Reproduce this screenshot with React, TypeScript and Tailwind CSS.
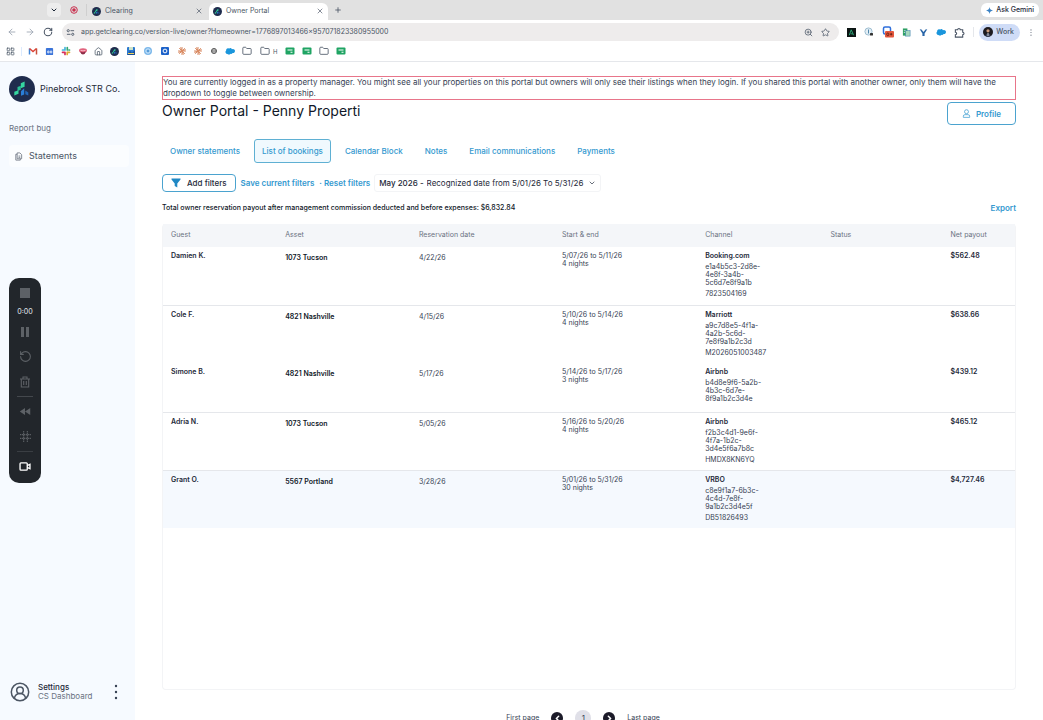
import type { ReactNode } from 'react';
import {
    ArrowLeft,
    ArrowRight,
    ChevronDown,
    ChevronLeft,
    ChevronRight,
    Folder,
    House,
    LayoutGrid,
    Plus,
    RotateCcw,
    RotateCw,
    Star,
    X,
    ZoomIn,
} from 'lucide-react';

interface Booking {
    guest: string;
    asset: string;
    reserved: string;
    dates: string;
    nights: string;
    channel: string;
    id: string;
    code?: string;
    payout: string;
    rowClass: string;
}

const bookings: Booking[] = [
    {
        guest: 'Damien K.',
        asset: '1073 Tucson',
        reserved: '4/22/26',
        dates: '5/07/26 to 5/11/26',
        nights: '4 nights',
        channel: 'Booking.com',
        id: 'e1a4b5c3-2d8e-4e8f-3a4b-5c6d7e8f9a1b',
        code: '7823504169',
        payout: '$562.48',
        rowClass: 'h-[58px] border-b border-gray-200',
    },
    {
        guest: 'Cole F.',
        asset: '4821 Nashville',
        reserved: '4/15/26',
        dates: '5/10/26 to 5/14/26',
        nights: '4 nights',
        channel: 'Marriott',
        id: 'a9c7d8e5-4f1a-4a2b-5c6d-7e8f9a1b2c3d',
        code: 'M2026051003487',
        payout: '$638.66',
        rowClass: 'h-[58px]',
    },
    {
        guest: 'Simone B.',
        asset: '4821 Nashville',
        reserved: '5/17/26',
        dates: '5/14/26 to 5/17/26',
        nights: '3 nights',
        channel: 'Airbnb',
        id: 'b4d8e9f6-5a2b-4b3c-6d7e-8f9a1b2c3d4e',
        payout: '$439.12',
        rowClass: 'h-[49px] border-b border-gray-200',
    },
    {
        guest: 'Adria N.',
        asset: '1073 Tucson',
        reserved: '5/05/26',
        dates: '5/16/26 to 5/20/26',
        nights: '4 nights',
        channel: 'Airbnb',
        id: 'f2b3c4d1-9e6f-4f7a-1b2c-3d4e5f6a7b8c',
        code: 'HMDX8KN6YQ',
        payout: '$465.12',
        rowClass: 'h-[58px] border-b border-gray-200',
    },
    {
        guest: 'Grant O.',
        asset: '5567 Portland',
        reserved: '3/28/26',
        dates: '5/01/26 to 5/31/26',
        nights: '30 nights',
        channel: 'VRBO',
        id: 'c8e9f1a7-6b3c-4c4d-7e8f-9a1b2c3d4e5f',
        code: 'DB51826493',
        payout: '$4,727.46',
        rowClass: 'h-[58px] bg-[#f5f9fe]',
    },
];

const columns = [
    { label: 'Guest', width: 'w-[13.4%]' },
    { label: 'Asset', width: 'w-[15.7%]' },
    { label: 'Reservation date', width: 'w-[16.8%]' },
    { label: 'Start & end', width: 'w-[16.8%]' },
    { label: 'Channel', width: 'w-[14.7%]' },
    { label: 'Status', width: 'w-[14.1%]' },
    { label: 'Net payout', width: 'w-[8.5%]' },
];

const tabs = [
    'Owner statements',
    'List of bookings',
    'Calendar Block',
    'Notes',
    'Email communications',
    'Payments',
];

const Logo = ({ className }: { className: string }) => (
    <svg viewBox="0 0 26 26" className={className} aria-hidden="true">
        <circle cx="13" cy="13" r="13" fill="#1f2c4d" />
        <path d="M11.800 7.200l3.800-1.700v5.300l-3.800 1.400z" fill="#35d6a0" />
        <path d="M8.500 11l3.300-1.300v4L8.500 15z" fill="#27bd93" />
        <path d="M5.300 15.800l4.200-1.600v3.600l-4.200 1.800z" fill="#35d6a0" />
        <path d="M12 15.200l3.200-3v6.200L12 19.800z" fill="#2a7fd8" />
        <path d="M16.300 14.500l3 2v3l-3-1.200z" fill="#2367b8" />
    </svg>
);

const Burst = () => (
    <svg viewBox="0 0 10 10" className="size-[10px]" stroke="#d98a62" strokeWidth="1" aria-hidden="true">
        <path d="M5 1v8M1 5h8M2.200 2.200l5.600 5.600M7.800 2.200L2.200 7.800M3.500 1.400l3 7.200M8.600 3.500l-7.200 3" />
    </svg>
);

const Cloud = ({ className }: { className: string }) => (
    <svg viewBox="0 0 12 9" className={className} fill="#1a96dc" aria-hidden="true">
        <path d="M3 8a2.400 2.400 0 01-1.600-4.200A2.300 2.300 0 015 1.600a2.200 2.200 0 013.300.7A2.500 2.500 0 119.200 7a2 2 0 01-2.600.7A2.200 2.200 0 013 8z" />
    </svg>
);

const Sheet = () => (
    <svg viewBox="0 0 10 10" className="size-[10px]" aria-hidden="true">
        <rect x=".5" y="1.500" width="9" height="7" rx="1" fill="#1fa463" />
        <path d="M2.500 4h5M5.500 6.200h2" stroke="#fff" strokeWidth="1.100" />
    </svg>
);

const Kebab = ({ className }: { className: string }) => (
    <svg viewBox="0 0 4 16" className={className} fill="currentColor" aria-hidden="true">
        <circle cx="2" cy="2" r="1.200" />
        <circle cx="2" cy="8" r="1.200" />
        <circle cx="2" cy="14" r="1.200" />
    </svg>
);

const BrowserTab = ({ title, active }: { title: string; active?: boolean }) => (
    <div
        className={`flex h-[17px] w-[119px] items-center gap-1 self-end px-1 pb-px ${
            active ? 'rounded-t-md bg-white' : ''
        }`}
    >
        <Logo className="size-[9px] shrink-0" />
        <span className="flex-1 text-[7px] text-gray-600">{title}</span>
        <button type="button" aria-label={`Close ${title}`}>
            <X className="size-[8px]" />
        </button>
    </div>
);

const Chrome = () => (
    <header className="shrink-0 border-b border-gray-200 bg-white text-gray-600">
        <div className="flex h-5 items-center bg-[#e1e1e1]">
            <button
                type="button"
                aria-label="Search tabs"
                className="ml-[47px] flex size-[14px] items-center justify-center rounded bg-[#ededed] text-gray-800"
            >
                <ChevronDown className="size-[8px]" strokeWidth={3} />
            </button>
            <svg viewBox="0 0 10 10" className="ml-2 size-[10px]" aria-hidden="true">
                <circle cx="5" cy="5" r="3.300" fill="none" stroke="#c9304f" />
                <circle cx="5" cy="5" r="1.800" fill="#c9304f" />
            </svg>
            <div className="ml-[7px] h-3 w-px bg-[#cfcfcf]" />
            <div className="ml-px flex h-full gap-[2px]">
                <BrowserTab title="Clearing" />
                <BrowserTab title="Owner Portal" active />
            </div>
            <button type="button" aria-label="New tab" className="ml-[6px]">
                <Plus className="size-[8px]" strokeWidth={2.5} />
            </button>
            <button
                type="button"
                className="mr-1 ml-auto flex h-[14px] items-center gap-[3px] rounded-md bg-white px-[5px] text-[7px] font-medium text-gray-800"
            >
                <svg viewBox="0 0 8 8" className="size-[7px]" fill="#3b82c4" aria-hidden="true">
                    <path d="M4 0c.4 2.400 1.600 3.600 4 4-2.400.4-3.600 1.600-4 4-.4-2.400-1.600-3.600-4-4 2.400-.4 3.600-1.600 4-4z" />
                </svg>
                Ask Gemini
            </button>
        </div>
        <div className="flex h-6 items-center">
            <div className="flex items-center gap-2 pl-[7px]">
                <ArrowLeft className="size-[10px] text-gray-400" />
                <ArrowRight className="size-[10px] text-gray-400" />
                <RotateCw className="size-[10px]" strokeWidth={2.5} />
            </div>
            <div className="ml-[9px] flex h-[18px] flex-1 items-center rounded-full bg-[#eeecec] px-1">
                <svg viewBox="0 0 10 10" className="size-[9px]" fill="none" stroke="currentColor" aria-hidden="true">
                    <circle cx="2.500" cy="3" r="1.200" />
                    <path d="M5 3h4M1 7h4" />
                    <circle cx="7.500" cy="7" r="1.200" />
                </svg>
                <input
                    aria-label="Address"
                    className="ml-[6px] flex-1 bg-transparent text-[7px] text-gray-600 outline-none"
                    defaultValue="app.getclearing.co/version-live/owner?Homeowner=1776897013466x957071823380955000"
                />
                <ZoomIn className="size-[9px]" />
                <Star className="mr-[5px] ml-2 size-[9px]" />
            </div>
            <div className="ml-[8px] flex items-center gap-2">
                <svg viewBox="0 0 10 10" className="size-[9px]" aria-hidden="true">
                    <rect width="10" height="10" fill="#0c1413" />
                    <path d="M2.500 8l2.200-6 2.600 6M4 6.500h2.500" fill="none" stroke="#2cae7c" />
                </svg>
                <svg viewBox="0 0 10 10" className="size-[10px]" aria-hidden="true">
                    <circle cx="4.500" cy="4.500" r="3.600" fill="#e3eef5" stroke="#9dbdd1" />
                    <path d="M4.500 2.500v4" stroke="#4f87ab" />
                    <rect x="6" y="6" width="3" height="2.600" rx=".5" fill="#333" />
                </svg>
                <svg viewBox="0 0 12 12" className="size-[12px]" aria-hidden="true">
                    <rect x="1.500" y="1" width="7" height="7" rx="1.500" fill="#fff" stroke="#2f6fdb" strokeWidth="1.500" />
                    <rect x="3" y="5" width="9" height="6.500" rx="1" fill="#e4573d" />
                    <rect x="4.800" y="7" width="2" height="2.600" rx=".8" fill="none" stroke="#5b1c12" strokeWidth=".8" />
                    <path d="M9.200 7v2.400M8 8.200h2.400" stroke="#5b1c12" strokeWidth=".8" />
                </svg>
                <svg viewBox="0 0 10 10" className="size-[9px]" aria-hidden="true">
                    <path d="M1 .5h5v8H1z" fill="#2d9f63" />
                    <rect x="4" y="3" width="5" height="6" fill="#a5d8bd" stroke="#3d7fae" strokeWidth=".6" />
                    <path d="M2 3h2M2 5h1.500" stroke="#fff" strokeWidth=".7" />
                </svg>
                <svg viewBox="0 0 10 10" className="size-[9px]" fill="#2a66a8" aria-hidden="true">
                    <path d="M.8 1.500l2 .3L5 4.500l2.200-2.700 2-.3L6.200 6v3H3.800V6z" />
                </svg>
                <Cloud className="h-[8px] w-[10px]" />
                <svg viewBox="0 0 12 12" className="size-[11px]" fill="none" stroke="currentColor" strokeWidth="1.200" aria-hidden="true">
                    <path d="M1.500 3H4a1.400 1.400 0 012.800 0h2.700v2.700a1.400 1.400 0 010 2.800V11h-8V8.500a1.400 1.400 0 000-2.800z" />
                </svg>
                <div className="h-[10px] w-px bg-gray-200" />
            </div>
            <button
                type="button"
                className="ml-[5px] flex h-[17px] items-center gap-[3px] rounded-full bg-[#cfdcf7] pr-[6px] pl-1 text-[7px] font-medium"
            >
                <svg viewBox="0 0 10 10" className="size-[10px]" aria-hidden="true">
                    <circle cx="5" cy="5" r="5" fill="#1c1b20" />
                    <circle cx="5" cy="3.800" r="1.600" fill="#c99a7c" />
                    <path d="M2.500 9a2.500 2.500 0 015 0L5 10z" fill="#39445e" />
                    <path d="M5 6v3" stroke="#eee" strokeWidth=".8" />
                </svg>
                Work
            </button>
            <Kebab className="mr-[11px] ml-[10px] h-[7px] w-[2px]" />
        </div>
        <nav aria-label="Bookmarks" className="flex h-[17px] items-center pb-[3px]">
            <LayoutGrid className="ml-[6px] size-[9px]" />
            <div className="ml-[6px] h-[9px] w-px bg-blue-100" />
            <div className="ml-[6px] flex w-[224px] items-center justify-between">
                <svg viewBox="0 0 10 10" className="size-[10px]" fill="none" strokeWidth="1.500" aria-hidden="true">
                    <path d="M1.500 8.500V2.500" stroke="#4285d4" />
                    <path d="M1.500 2.500L5 5.500l3.500-3" stroke="#dd4538" />
                    <path d="M8.500 2.500v6" stroke="#c94f3a" />
                </svg>
                <svg viewBox="0 0 10 10" className="size-[9px]" aria-hidden="true">
                    <rect x="1" y="1" width="8" height="8" rx="1" fill="#3b74d9" />
                    <path d="M3 4.500h1.500v2H3zM6 4.500h1.500v2H6z" fill="none" stroke="#fff" strokeWidth=".8" />
                </svg>
                <svg viewBox="0 0 10 10" className="size-[10px]" strokeWidth="1.700" strokeLinecap="round" aria-hidden="true">
                    <path d="M4 1.500v2.500M1.500 4h2" stroke="#45b5dd" />
                    <path d="M6.300 1.500v2.500M8.500 4h-.5" stroke="#35a873" />
                    <path d="M6.200 6.300v2.200M6.300 6.300h2.200" stroke="#dfaa32" />
                    <path d="M1.500 6.300H4M4 6.500v2" stroke="#d62d5c" />
                </svg>
                <svg viewBox="0 0 10 10" className="size-[10px]" aria-hidden="true">
                    <ellipse cx="5" cy="4.600" rx="4" ry="2.400" fill="#e0617c" />
                    <path d="M2 5.500q3 1.500 6 0-1 3-3 3t-3-3z" fill="#8d2c46" />
                    <path d="M2.500 4.300q2.500 1 5 0" stroke="#f7b6c3" fill="none" />
                </svg>
                <House className="size-[9px]" />
                <Logo className="size-[9px]" />
                <svg viewBox="0 0 10 10" className="size-[10px]" aria-hidden="true">
                    <rect x="1" y="1" width="8" height="8" rx="1" fill="#2b78cf" />
                    <path d="M1 9l3-4 2 2 3-3v5z" fill="#1c4f96" />
                    <path d="M3 1h4v3H3z" fill="#cde3c9" />
                    <path d="M2 7.500h6" stroke="#edd25b" />
                </svg>
                <svg viewBox="0 0 10 10" className="size-[10px]" aria-hidden="true">
                    <circle cx="5" cy="5" r="4" fill="#7cb8ea" />
                    <circle cx="5" cy="5" r="2.200" fill="none" stroke="#e1f0fc" strokeWidth=".8" />
                    <circle cx="5" cy="5" r=".8" fill="#2d7ac0" />
                </svg>
                <svg viewBox="0 0 10 10" className="size-[10px]" aria-hidden="true">
                    <rect x="1" y="1" width="8" height="8" rx="1" fill="#1d62c9" />
                    <circle cx="5" cy="5" r="1.900" fill="none" stroke="#fff" />
                </svg>
                <Burst />
                <Burst />
                <svg viewBox="0 0 10 10" className="size-[8px]" fill="none" stroke="#555" strokeWidth="1.200" aria-hidden="true">
                    <circle cx="5" cy="5" r="3.200" />
                    <path d="M5 2.500l2.200 1.300v2.500L5 7.500 2.800 6.200V3.800zM2.800 3.800l4.400 2.500M7.200 3.800L2.800 6.300" strokeWidth=".7" />
                </svg>
                <Cloud className="h-[8px] w-[10px]" />
                <Folder className="size-[10px]" />
            </div>
            <div className="ml-2 flex items-center gap-[3px] text-[6px]">
                <Folder className="size-[10px]" />H
            </div>
            <div className="ml-2 flex items-center gap-[7px]">
                <Sheet />
                <Sheet />
                <Folder className="size-[10px]" />
                <Sheet />
            </div>
        </nav>
    </header>
);

const Sidebar = () => (
    <aside className="flex w-[135px] shrink-0 flex-col bg-[#f6faff] px-[9px] pt-[14px] pb-[18px] text-gray-700">
        <div className="flex items-center gap-[5px]">
            <Logo className="size-[26px] shrink-0" />
            <span className="text-[9px] whitespace-nowrap text-gray-800">Pinebrook STR Co.</span>
        </div>
        <a href="#report" className="mt-5 text-[8px] leading-3 text-gray-500">
            Report bug
        </a>
        <a
            href="#statements"
            className="mt-[11px] -mr-[3px] flex h-[22px] items-center gap-[6px] rounded bg-[#fbfdff] pl-[5px] text-[9px] text-gray-600"
        >
            <svg viewBox="0 0 10 10" className="size-[9px]" fill="none" stroke="#6b7280" strokeWidth=".9" aria-hidden="true">
                <path d="M3.500 1h3l2 2v4.500h-5zM3.500 2.500H2V9h5V7.500M5 4.500h2M5 6h2" />
            </svg>
            Statements
        </a>
        <div className="mt-auto flex items-center">
            <svg viewBox="0 0 20 20" className="ml-px size-5" fill="none" stroke="#4b5563" strokeWidth="1.500" aria-hidden="true">
                <circle cx="10" cy="10" r="8.700" />
                <circle cx="10" cy="8.300" r="3.300" />
                <path d="M4.300 16.300c.8-3 2.800-4.700 5.700-4.700s4.900 1.700 5.700 4.700" />
            </svg>
            <div className="ml-2 flex flex-col text-[8px] leading-[9px]">
                <span className="font-medium text-gray-800">Settings</span>
                <span className="text-gray-500">CS Dashboard</span>
            </div>
            <button type="button" aria-label="More" className="mr-[8px] ml-auto">
                <Kebab className="h-4 w-1" />
            </button>
        </div>
    </aside>
);

const RecorderButton = ({ label, children }: { label: string; children: ReactNode }) => (
    <button type="button" aria-label={label} className="flex h-[25px] items-center justify-center">
        {children}
    </button>
);

// floating screen recorder controls
const Recorder = () => (
    <div className="absolute top-[278px] left-[9px] flex w-8 flex-col items-stretch rounded-[10px] bg-[#22262b] pt-[2px] pb-1 text-[#5d6166]">
        <RecorderButton label="Stop">
            <span className="size-[10px] bg-[#5d6166]" />
        </RecorderButton>
        <span className="h-[14px] text-center text-[7px] leading-[14px] font-medium text-gray-300">0:00</span>
        <RecorderButton label="Pause">
            <svg viewBox="0 0 10 10" className="size-[10px]" fill="currentColor">
                <path d="M1 0h3v10H1zM6 0h3v10H6z" />
            </svg>
        </RecorderButton>
        <RecorderButton label="Restart">
            <RotateCcw className="size-[13px]" />
        </RecorderButton>
        <RecorderButton label="Delete">
            <svg viewBox="0 0 12 12" className="size-[12px]" fill="none" stroke="currentColor" strokeWidth="1.100">
                <path d="M1 3h10M4 3V1h4v2M2.300 3v8h7.400V3M4.700 5v4M7.300 5v4" />
            </svg>
        </RecorderButton>
        <div className="mx-2 my-[2px] h-px bg-[#44484d]" />
        <RecorderButton label="Rewind">
            <svg viewBox="0 0 12 8" className="h-[7px] w-[12px]" fill="currentColor">
                <path d="M6 0v8L0 4zM12 0v8L6 4z" />
            </svg>
        </RecorderButton>
        <RecorderButton label="Blur">
            <svg viewBox="0 0 12 12" className="size-[11px]" stroke="currentColor" strokeWidth="1.200" strokeDasharray="1.500 .7">
                <path d="M4 0v12M8 0v12M0 4h12M0 8h12" />
            </svg>
        </RecorderButton>
        <div className="mx-2 my-[2px] h-px bg-[#3a3e43]" />
        <RecorderButton label="Camera">
            <svg viewBox="0 0 13 10" className="h-[9px] w-[12px]" fill="none" stroke="#fff" strokeWidth="1.500">
                <rect x="1" y="1" width="8" height="8" rx="1" />
                <path d="M9 4l3-1.500v5L9 6" />
            </svg>
        </RecorderButton>
    </div>
);

const BookingRow = ({ booking }: { booking: Booking }) => (
    <tr className={`align-top text-[7px] leading-[8px] ${booking.rowClass}`}>
        <td className="px-2 pt-[5px] font-semibold text-gray-800">{booking.guest}</td>
        <td className="px-2 pt-[7px] font-semibold text-gray-900">{booking.asset}</td>
        <td className="px-2 pt-[7px]">{booking.reserved}</td>
        <td className="px-2 pt-[5px]">
            <div>{booking.dates}</div>
            <div>{booking.nights}</div>
        </td>
        <td className="px-2 pt-[5px]">
            <div className="flex w-[64px] flex-col gap-[3px]">
                <span className="font-semibold text-gray-800">{booking.channel}</span>
                <span>{booking.id}</span>
                {booking.code && <span>{booking.code}</span>}
            </div>
        </td>
        <td />
        <td className="px-2 pt-[5px] font-semibold text-gray-800">{booking.payout}</td>
    </tr>
);

const App = () => {
    return (
        <div className="relative flex h-screen flex-col overflow-hidden bg-white font-['Inter',sans-serif]">
            <Chrome />
            <div className="flex min-h-0 flex-1">
                <Sidebar />
                <main className="flex min-w-0 flex-1 flex-col overflow-hidden px-[27px] pt-[14px] text-gray-700">
                    <p className="shrink-0 border border-[#e8758a] text-[8px] leading-[11px]">
                        You are currently logged in as a property manager. You might see all your properties on
                        this portal but owners will only see their listings when they login. If you shared this
                        portal with another owner, only them will have the dropdown to toggle between ownership.
                    </p>
                    <div className="mt-[2px] flex items-start justify-between">
                        <h1 className="text-[14px] leading-[18px] text-gray-900">
                            Owner Portal - Penny Properti
                        </h1>
                        <button
                            type="button"
                            className="flex h-[23px] items-center gap-[5px] rounded border border-[#4ba3cf] px-[14px] text-[8px] font-semibold text-[#3499cf]"
                        >
                            <svg viewBox="0 0 10 10" className="size-[9px]" fill="none" stroke="currentColor" strokeWidth=".8" aria-hidden="true">
                                <circle cx="5" cy="3" r="2.200" />
                                <path d="M1.500 9.300V8q0-1.700 1.700-1.700h3.600Q8.500 6.300 8.500 8v1.300z" />
                            </svg>
                            Profile
                        </button>
                    </div>
                    <nav className="mt-[14px] flex gap-[6px]">
                        {tabs.map((tab) => (
                            <button
                                key={tab}
                                type="button"
                                className={`h-6 rounded-[3px] border px-[7px] text-[8px] font-medium text-[#3499cf] ${
                                    tab === 'List of bookings'
                                        ? 'border-[#5fb0d3] bg-[#f0f9fe]'
                                        : 'border-transparent'
                                }`}
                            >
                                {tab}
                            </button>
                        ))}
                    </nav>
                    <div className="mt-[11px] flex items-center text-[8px] font-medium text-[#3499cf]">
                        <button
                            type="button"
                            className="flex h-[18px] items-center gap-[6px] rounded border border-[#4ba3cf] px-2 text-gray-800"
                        >
                            <svg viewBox="0 0 10 10" className="size-[10px]" fill="#2088c4" aria-hidden="true">
                                <path d="M.5.500h9v1L6.300 5.500v4L3.700 8V5.500L.5 1.500z" />
                            </svg>
                            Add filters
                        </button>
                        <a href="#save" className="ml-[5px] font-semibold">
                            Save current filters
                        </a>
                        <a href="#reset" className="ml-[5px] font-semibold">
                            · Reset filters
                        </a>
                        <div className="relative ml-1 flex h-[18px] items-center gap-[3px] rounded-[3px] border border-gray-100 px-1 text-gray-800">
                            <label htmlFor="period">May 2026 -</label>
                            <select id="period" className="appearance-none bg-transparent pr-3 font-normal outline-none">
                                <option>Recognized date from 5/01/26 To 5/31/26</option>
                            </select>
                            <ChevronDown className="pointer-events-none absolute right-1 size-[8px]" />
                        </div>
                    </div>
                    <div className="mt-[10px] flex items-center justify-between leading-3">
                        <p className="text-[7px] font-medium text-gray-900">
                            Total owner reservation payout after management commission deducted and before
                            expenses: $6,832.84
                        </p>
                        <a href="#export" className="text-[8px] font-semibold text-[#3499cf]">
                            Export
                        </a>
                    </div>
                    <div className="mt-[10px] min-h-[466px] rounded-sm border border-t-0 border-gray-100">
                        <table className="w-full table-fixed border-collapse">
                            <thead>
                                <tr className="h-[23px] bg-[#f4f6f9] text-left text-[7px] text-gray-500">
                                    {columns.map((column) => (
                                        <th key={column.label} className={`px-2 font-normal ${column.width}`}>
                                            {column.label}
                                        </th>
                                    ))}
                                </tr>
                            </thead>
                            <tbody>
                                {bookings.map((booking) => (
                                    <BookingRow key={booking.guest} booking={booking} />
                                ))}
                            </tbody>
                        </table>
                    </div>
                    <div className="mt-5 flex shrink-0 items-center justify-center gap-3 pr-3 text-[7px]">
                        <button type="button">First page</button>
                        <button
                            type="button"
                            aria-label="Previous page"
                            className="flex size-3 items-center justify-center rounded-full bg-[#1c1b29] text-white"
                        >
                            <ChevronLeft className="size-[9px]" strokeWidth={4} />
                        </button>
                        <button type="button" className="size-4 rounded-full bg-[#e0e0e8] text-[8px]">
                            1
                        </button>
                        <button
                            type="button"
                            aria-label="Next page"
                            className="flex size-3 items-center justify-center rounded-full bg-[#1c1b29] text-white"
                        >
                            <ChevronRight className="size-[9px]" strokeWidth={4} />
                        </button>
                        <button type="button">Last page</button>
                    </div>
                </main>
            </div>
            <Recorder />
        </div>
    );
};

export default App;
